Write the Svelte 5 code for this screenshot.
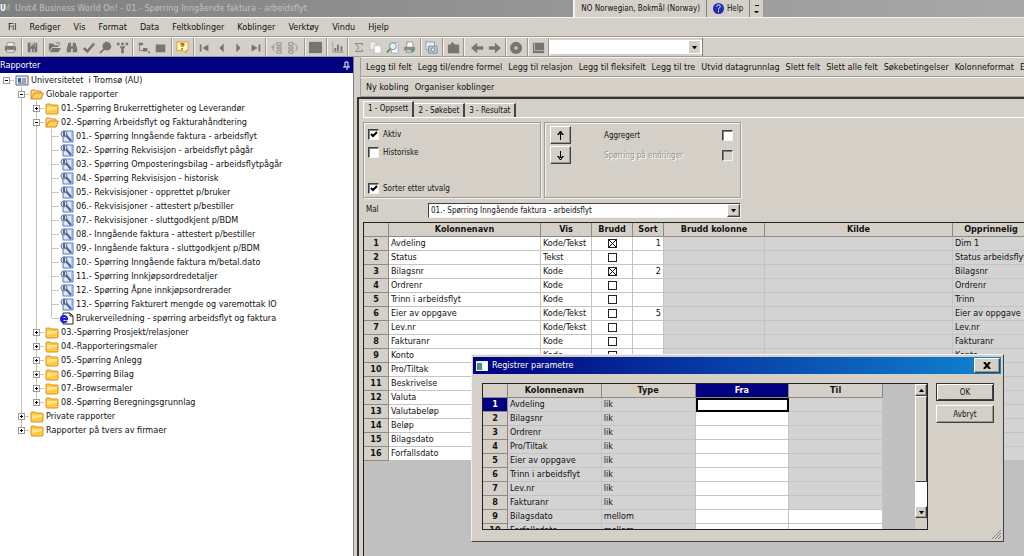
<script lang="ts">
  type TreeNode = { label: string; level: number; icon: string; state?: "open" | "closed"; last?: boolean };

  const menus = ["Fil", "Rediger", "Vis", "Format", "Data", "Feltkoblinger", "Koblinger", "Verktøy", "Vindu", "Hjelp"];

  const toolGroups = [
    ["print"],
    ["save"],
    ["open", "find", "check", "search", "filter"],
    ["tree", "stop"],
    ["help"],
    ["first", "prev", "next", "last"],
    ["collapse", "expand"],
    ["block"],
    ["chart"],
    ["sum", "copy", "preview", "printview"],
    ["camera"],
    ["paste"],
  ];
  const navGroups = [["back", "forward"], ["disc"], ["window"]];

  const fieldActions = [
    "Legg til felt",
    "Legg til/endre formel",
    "Legg til relasjon",
    "Legg til fleksifelt",
    "Legg til tre",
    "Utvid datagrunnlag",
    "Slett felt",
    "Slett alle felt",
    "Søkebetingelser",
    "Kolonneformat",
    "E",
  ];
  const linkActions = ["Ny kobling", "Organiser koblinger"];

  const reports = [
    "01.- Spørring Inngående faktura - arbeidsflyt",
    "02.- Spørring Rekvisisjon - arbeidsflyt pågår",
    "03.- Spørring Omposteringsbilag - arbeidsflytpågår",
    "04.- Spørring Rekvisisjon - historisk",
    "05.- Rekvisisjoner - opprettet p/bruker",
    "06.- Rekvisisjoner - attestert p/bestiller",
    "07.- Rekvisisjoner - sluttgodkjent p/BDM",
    "08.- Inngående faktura - attestert p/bestiller",
    "09.- Inngående faktura - sluttgodkjent p/BDM",
    "10.- Spørring Inngående faktura m/betal.dato",
    "11.- Spørring Innkjøpsordredetaljer",
    "12.- Spørring Åpne innkjøpsordrerader",
    "13.- Spørring Fakturert mengde og varemottak IO",
  ];

  const tree: TreeNode[] = [
    { label: "Universitetet  i Tromsø (AU)", level: 0, icon: "client", state: "open" },
    { label: "Globale rapporter", level: 1, icon: "folderOpen", state: "open" },
    { label: "01.-Spørring Brukerrettigheter og Leverandør", level: 2, icon: "folder", state: "closed" },
    { label: "02.-Spørring Arbeidsflyt og Fakturahåndtering", level: 2, icon: "folderOpen", state: "open" },
    ...reports.map((label) => ({ label, level: 3, icon: "report" })),
    { label: "Brukerveiledning - spørring arbeidsflyt og faktura", level: 3, icon: "web", last: true },
    { label: "03.-Spørring Prosjekt/relasjoner", level: 2, icon: "folder", state: "closed" },
    { label: "04.-Rapporteringsmaler", level: 2, icon: "folder", state: "closed" },
    { label: "05.-Spørring Anlegg", level: 2, icon: "folder", state: "closed" },
    { label: "06.-Spørring Bilag", level: 2, icon: "folder", state: "closed" },
    { label: "07.-Browsermaler", level: 2, icon: "folder", state: "closed" },
    { label: "08.-Spørring Beregningsgrunnlag", level: 2, icon: "folder", state: "closed", last: true },
    { label: "Private rapporter", level: 1, icon: "folder", state: "closed" },
    { label: "Rapporter på tvers av firmaer", level: 1, icon: "folder", state: "closed", last: true },
  ];

  const columns = [
    { name: "Avdeling", vis: "Kode/Tekst", brudd: true, sort: "1", origin: "Dim 1" },
    { name: "Status", vis: "Tekst", brudd: false, sort: "", origin: "Status arbeidsflyt" },
    { name: "Bilagsnr", vis: "Kode", brudd: true, sort: "2", origin: "Bilagsnr" },
    { name: "Ordrenr", vis: "Kode", brudd: false, sort: "", origin: "Ordrenr" },
    { name: "Trinn i arbeidsflyt", vis: "Kode", brudd: false, sort: "", origin: "Trinn" },
    { name: "Eier av oppgave", vis: "Kode/Tekst", brudd: false, sort: "5", origin: "Eier av oppgave" },
    { name: "Lev.nr", vis: "Kode/Tekst", brudd: false, sort: "", origin: "Lev.nr" },
    { name: "Fakturanr", vis: "Kode", brudd: false, sort: "", origin: "Fakturanr" },
    { name: "Konto", vis: "Kode", brudd: false, sort: "", origin: "Konto" },
    ...["Pro/Tiltak", "Beskrivelse", "Valuta", "Valutabeløp", "Beløp", "Bilagsdato", "Forfallsdato"].map((name) => ({
      name,
      vis: "",
      brudd: false,
      sort: "",
      origin: "",
    })),
  ];

  const parameters = [
    ...["Avdeling", "Bilagsnr", "Ordrenr", "Pro/Tiltak", "Eier av oppgave", "Trinn i arbeidsflyt", "Lev.nr", "Fakturanr"].map(
      (name) => ({ name, type: "lik" })
    ),
    { name: "Bilagsdato", type: "mellom" },
    { name: "Forfallsdato", type: "mellom" },
  ];

  let activeTab = $state(0);
  let dialogOpen = $state(true);
</script>

{#snippet toolIcon(name: string)}
  <svg viewBox="0 0 15 15" fill="#777570" stroke="none" aria-hidden="true">
    {#if name === "print"}
      <path d="M4 2h8l-1 4H3z" fill="#f4f4f4" stroke="#888" />
      <path d="M1 6h13v5H1z" />
      <path d="M3 10h9v3H3z" fill="#e8eee8" stroke="#888" />
      <path d="M11 8h2" stroke="#8fc48f" />
    {:else if name === "save"}
      <path d="M2 2h11v11H2z" />
      <path d="M4 2h1v5h6V2M5 9h2v4H5zM9 9h1v4H9z" fill="#c4c1ba" />
      <path d="M5 7l5-5v5z" />
    {:else if name === "open"}
      <path d="M1 3h5l1 2h5v2H5l-4 5z" />
      <path d="M5 8h10l-3 5H2z" />
      <path d="M9 2h4v3" fill="none" stroke="#777570" />
    {:else if name === "find"}
      <path d="M4 2h3v4h2V2h3l2 7v4H9V9H7v4H2V9z" />
    {:else if name === "check"}
      <path d="M2 8l4 4 8-9" fill="none" stroke="#777570" stroke-width="3" />
    {:else if name === "search"}
      <circle cx="9" cy="6" r="5" />
      <path d="M6 9l-5 5" stroke="#777570" stroke-width="2" />
    {:else if name === "filter"}
      <path d="M1 2h3v3H1zM6 2h3v3H6zM11 2h3v3h-3zM4 6h7L9 9v5H6V9z" />
    {:else if name === "tree"}
      <path d="M2 2h5v3H2zM7 8h5v4H7zM13 12h2v2h-2z" />
      <path d="M3 5v6h4" fill="none" stroke="#777570" />
    {:else if name === "stop"}
      <path d="M2 4h11v9H2z" />
    {:else if name === "help"}
      <path d="M1 1h13v10h-3l1 3-5-3H1z" fill="#fff7b8" stroke="#d6932c" />
      <path d="M5 4q3-2 4 0 0 1-2 2v1M7 8v2" fill="none" stroke="#b06a1a" stroke-width="2" />
    {:else if name === "first"}
      <path d="M2 4h2v8H2zM12 4v8L5 8z" />
    {:else if name === "prev"}
      <path d="M10 3v10L5 8z" />
    {:else if name === "next"}
      <path d="M5 3v10l5-5z" />
    {:else if name === "last"}
      <path d="M3 4v8l7-4zM11 4h2v8h-2z" />
    {:else if name === "collapse"}
      <path d="M8 2h5v3H8zM8 7h5v2H8zM8 11h5v3H8z" fill="none" stroke="#888" />
      <path d="M6 3q-5 4-1 9M1 7h4" fill="none" stroke="#888" />
    {:else if name === "expand"}
      <path d="M2 2h5v3H2zM2 7h5v2H2zM2 11h5v3H2z" fill="none" stroke="#888" />
      <path d="M9 3q5 4 1 9" fill="none" stroke="#888" />
    {:else if name === "block"}
      <path d="M0 1h15v13H0z" />
    {:else if name === "chart"}
      <path d="M2 1v12h13" fill="none" stroke="#999" />
      <path d="M4 8h2v4H4zM7 4h2v8H7zM11 6h2v6h-2z" />
    {:else if name === "sum"}
      <path d="M12 5V3H4l4 5-4 4h8v-2" fill="none" stroke="#777" />
    {:else if name === "copy"}
      <path d="M1 1h7v9H1z" fill="#eee" stroke="#bbb" />
      <path d="M6 5h5l3 2v7H6z" fill="#fff" stroke="#bbb" />
    {:else if name === "preview"}
      <path d="M7 2h7v12H6z" fill="#fff" stroke="#9aa5b5" />
      <circle cx="8" cy="6" r="4" fill="#dff0f4" stroke="#728094" />
      <path d="M5 9l-4 4" stroke="#5f8a58" stroke-width="2" />
    {:else if name === "printview"}
      <path d="M5 1h6l1 6H4z" fill="#fff" stroke="#888" />
      <path d="M1 7h13v4H1z" fill="#8c8c8c" />
      <path d="M4 10h7v3H4z" fill="#cfe8c8" stroke="#888" />
      <circle cx="11" cy="11" r="2" fill="#58a657" />
    {:else if name === "camera"}
      <path d="M1 1h10v9H1z" fill="#e4ebf0" stroke="#8b97a5" />
      <path d="M4 6h10v8H4z" fill="#b8c5d4" stroke="#7d8a99" />
      <circle cx="9" cy="10" r="2" fill="#f4f4f4" stroke="#66788d" />
    {:else if name === "paste"}
      <path d="M1 4h3l2-3 3 3h5v10H1z" />
    {:else if name === "back"}
      <path d="M0 8l7-6v4h7v4H7v4z" />
    {:else if name === "forward"}
      <path d="M15 8L8 2v4H1v4h7v4z" />
    {:else if name === "disc"}
      <circle cx="7" cy="8" r="7" />
      <circle cx="7" cy="8" r="2" fill="#d4d0c8" />
    {:else}
      <path d="M1 2h13v12H1z" />
      <path d="M3 2v9h11" fill="none" stroke="#bbb" />
    {/if}
  </svg>
{/snippet}

{#snippet treeIcon(name: string)}
  <svg class="tree-icon" viewBox="0 0 14 13" aria-hidden="true">
    {#if name === "client"}
      <path d="M1 2h12v9H1z" fill="#e9eef8" stroke="#5a6478" />
      <path d="M3 4h3v4H3z" fill="#2f5fd0" />
      <path d="M7 5h4M7 7h4M3 9h8" stroke="#555" />
    {:else if name === "folder"}
      <path d="M1 3q0-1 1-1h3l1 1h6q1 0 1 1v7q0 1-1 1H2q-1 0-1-1z" fill="#ffcb3d" stroke="#d8922a" />
      <path d="M2 5h10v2L2 9z" fill="#ffe38b" />
    {:else if name === "folderOpen"}
      <path d="M1 11V3q0-1 1-1h3l1 1h5v3" fill="#ffe08a" stroke="#d8832a" />
      <path d="M1 11l3-6h9q1 0 0 1l-2 5z" fill="#ffd153" stroke="#d8832a" />
    {:else if name === "report"}
      <path d="M3 1h10v11H3z" fill="#d9e8fb" stroke="#4f79cc" />
      <path d="M12 2v9" stroke="#7fa4ea" />
      <circle cx="4" cy="4" r="3" fill="#dde3ee" stroke="#66728e" />
      <path d="M4 2v4M6 5l5 6" stroke="#53617e" stroke-width="2" />
    {:else}
      <path d="M3 1h7l3 3v8H3z" fill="#fff" stroke="#222" />
      <path d="M10 1v3h3" fill="none" stroke="#222" />
      <path d="M2 7h5q0-3-3-3T1 7t3 3q2 0 3-1" fill="none" stroke="#1423d6" stroke-width="2" />
    {/if}
  </svg>
{/snippet}

{#snippet tools(groups: string[][])}
  {#each groups as group}
    <div class="tool-group">
      {#each group as name}
        <button class="tool" aria-label={name}>{@render toolIcon(name)}</button>
      {/each}
    </div>
  {/each}
{/snippet}

{#snippet arrow(direction: string)}
  <svg class="arrow" viewBox="0 0 7 4" aria-hidden="true">
    <path d={direction === "up" ? "M0 4h7L4 0H3z" : "M0 0h7L4 4H3z"} />
  </svg>
{/snippet}

<div class="app">
  <header class="title-bar">
    <div class="title">
      <span class="logo"><b>U</b><i>4</i></span>
      <span>Unit4 Business World On! - 01.- Spørring Inngående faktura - arbeidsflyt</span>
    </div>
    <div class="lang-bar">
      <button class="lang">NO Norwegian, Bokmål (Norway)</button>
      <button class="lang-help">
        <svg viewBox="0 0 12 12" aria-hidden="true">
          <circle cx="6" cy="6" r="6" fill="#1c2fae" />
          <path d="M4 4q0-2 2-2t2 2q0 1-2 2v1M6 8v2" fill="none" stroke="#fff" stroke-width="1" />
        </svg>
        Help
      </button>
      <button class="lang-more" aria-label="Options">
        <svg viewBox="0 0 6 10" aria-hidden="true"><path d="M1 1h4v1H1zM0 7h5L3 9H2z" /></svg>
      </button>
    </div>
  </header>

  <nav class="menu-bar">
    {#each menus as menu}
      <button>{menu}</button>
    {/each}
  </nav>

  <div class="toolbar">
    {@render tools(toolGroups)}
    <div class="nav-tools">
      {@render tools(navGroups)}
      <div class="address">
        <input type="text" aria-label="Adresse" />
        <button aria-label="Vis liste">{@render arrow("down")}</button>
      </div>
    </div>
  </div>

  <div class="workspace">
    <aside class="sidebar">
      <div class="sidebar-title">
        <span>Rapporter</span>
        <button aria-label="Fest">
          <svg viewBox="0 0 7 9" fill="none" stroke="#fff" aria-hidden="true">
            <path d="M2 1v5M2 1h3v5M0 6h7M4 6v3" />
          </svg>
        </button>
      </div>
      <ul class="tree">
        {#each tree as node}
          <li>
            {#each { length: node.level } as _, i}
              <span class="guide" class:line={i > 0}></span>
            {/each}
            <span class="guide elbow" class:line={node.level > 0 && !node.last} class:end={node.last}>
              {#if node.state}
                <button class="toggle" class:closed={node.state === "closed"} aria-label={node.label}></button>
              {/if}
            </span>
            {@render treeIcon(node.icon)}
            <span class="node-label">{node.label}</span>
          </li>
        {/each}
      </ul>
    </aside>

    <main class="content">
      <div class="action-bar">
        {#each fieldActions as action}
          <button>{action}</button>
        {/each}
      </div>
      <div class="action-bar">
        {#each linkActions as action}
          <button>{action}</button>
        {/each}
      </div>

      <div class="frame">
        <div class="tabs" role="tablist">
          {#each ["1 - Oppsett", "2 - Søkebet", "3 - Resultat"] as tab, i}
            <button role="tab" aria-selected={activeTab === i} class:active={activeTab === i} onclick={() => (activeTab = i)}>
              {tab}
            </button>
          {/each}
        </div>
        <div class="page">
          <div class="groups">
            <div class="group options">
              <label><input type="checkbox" class="check" checked /> Aktiv</label>
              <label><input type="checkbox" class="check" /> Historiske</label>
              <label class="sorter"><input type="checkbox" class="check" checked /> Sorter etter utvalg</label>
            </div>
            <div class="group aggregate">
              <button class="move" aria-label="Flytt opp">
                <svg viewBox="0 0 9 11" aria-hidden="true"><path d="M4 2h1v8H4zM1 5l3-4h1l3 4H6L5 3H4L3 5z" /></svg>
              </button>
              <label for="aggregert">Aggregert</label>
              <input id="aggregert" type="checkbox" class="check" />
              <button class="move" aria-label="Flytt ned">
                <svg viewBox="0 0 9 11" aria-hidden="true"><path d="M4 1h1v8H4zM1 6l3 4h1l3-4H6L5 8H4L3 6z" /></svg>
              </button>
              <label for="endringer" class="disabled">Spørring på endringer</label>
              <input id="endringer" type="checkbox" class="check" disabled />
            </div>
          </div>

          <div class="template">
            <label for="mal">Mal</label>
            <div class="combo">
              <select id="mal">
                {#each reports as report}
                  <option>{report}</option>
                {/each}
              </select>
              <span class="combo-arrow">{@render arrow("down")}</span>
            </div>
          </div>

          <div class="grid-pane">
            <table class="grid main-grid">
              <thead>
                <tr>
                  <th class="num"></th>
                  <th class="name">Kolonnenavn</th>
                  <th class="vis">Vis</th>
                  <th class="brudd">Brudd</th>
                  <th class="sort">Sort</th>
                  <th class="group-column">Brudd kolonne</th>
                  <th class="source">Kilde</th>
                  <th>Opprinnelig</th>
                </tr>
              </thead>
              <tbody>
                {#each columns as row, i}
                  <tr>
                    <th scope="row">{i + 1}</th>
                    <td>{row.name}</td>
                    <td>{row.vis}</td>
                    <td class="center"><input type="checkbox" class="cell-check" checked={row.brudd} aria-label="Brudd" /></td>
                    <td class="right">{row.sort}</td>
                    <td class="locked"></td>
                    <td class="locked"></td>
                    <td class="locked">{row.origin}</td>
                  </tr>
                {/each}
              </tbody>
            </table>
          </div>
        </div>
      </div>
    </main>
  </div>

  {#if dialogOpen}
    <div class="dialog" role="dialog" aria-labelledby="dialog-title">
      <div class="dialog-title">
        <svg viewBox="0 0 12 10" aria-hidden="true">
          <path d="M0 0h12v10H0z" fill="#e8f0f4" />
          <path d="M1 2h5v7H1z" fill="#4c8f86" />
          <path d="M7 2h4v7H7z" fill="#fff" />
        </svg>
        <h2 id="dialog-title">Registrer parametre</h2>
        <button class="close" aria-label="Lukk" onclick={() => (dialogOpen = false)}>
          <svg viewBox="0 0 8 7" aria-hidden="true"><path d="M1 0l6 7M7 0L1 7" stroke="#000" stroke-width="2" /></svg>
        </button>
      </div>
      <div class="dialog-body">
        <div class="param-pane">
          <div class="param-scroll">
            <table class="grid param-grid">
              <thead>
                <tr>
                  <th class="num"></th>
                  <th>Kolonnenavn</th>
                  <th>Type</th>
                  <th class="selected">Fra</th>
                  <th>Til</th>
                </tr>
              </thead>
              <tbody>
                {#each parameters as row, i}
                  <tr>
                    <th scope="row" class:selected={i === 0}>{i + 1}</th>
                    <td class="locked">{row.name}</td>
                    <td class="locked">{row.type}</td>
                    <td class="entry" class:current={i === 0}><input type="text" aria-label="{row.name} fra" /></td>
                    {#if row.type === "mellom"}
                      <td class="entry"><input type="text" aria-label="{row.name} til" /></td>
                    {:else}
                      <td class="locked"></td>
                    {/if}
                  </tr>
                {/each}
              </tbody>
            </table>
          </div>
          <div class="scrollbar">
            <button aria-label="Rull opp">{@render arrow("up")}</button>
            <div class="thumb"></div>
            <div class="track"></div>
            <button aria-label="Rull ned">{@render arrow("down")}</button>
            <div class="corner"></div>
          </div>
        </div>
        <div class="dialog-actions">
          <button class="default" onclick={() => (dialogOpen = false)}>OK</button>
          <button onclick={() => (dialogOpen = false)}>Avbryt</button>
        </div>
      </div>
      <svg class="grip" viewBox="0 0 9 9" stroke="#808080" aria-hidden="true">
        <path d="M0 9l9-9M3 9l6-6M6 9l3-3" />
      </svg>
    </div>
  {/if}
</div>

<style>
  :global(body) {
    margin: 0;
    background: #c0c0c0;
  }

  .app {
    --face: #d4d0c8;
    --shade: #808080;
    --navy: #000080;
    display: flex;
    flex-direction: column;
    height: 100vh;
    overflow: hidden;
    background: var(--face);
    color: #111;
    font-family: "DejaVu Sans Condensed", "DejaVu Sans", sans-serif;
    font-size: 9px;
    line-height: 13px;
  }

  .app *,
  .app *::before,
  .app *::after {
    box-sizing: border-box;
  }

  button {
    padding: 0;
    border: 0;
    background: transparent;
    color: inherit;
    font: inherit;
    white-space: nowrap;
  }

  input,
  select {
    margin: 0;
    padding: 0;
    border: 0;
    border-radius: 0;
    outline: 0;
    font: inherit;
    color: inherit;
    appearance: none;
  }

  svg {
    display: block;
    flex: none;
  }

  /* title bar */
  .title-bar {
    display: flex;
    flex: none;
    height: 17px;
    background: linear-gradient(90deg, #808080, #a8a8a8);
  }

  .title-bar::after {
    content: "";
    flex: 5 1 0;
  }

  .title {
    display: flex;
    flex: 11 1 0;
    align-items: center;
    gap: 4px;
    min-width: 0;
    overflow: hidden;
    color: #c4c1ba;
    white-space: nowrap;
  }

  .logo {
    width: 11px;
    font-size: 8px;
  }

  .logo b {
    color: #fff;
  }

  .logo i {
    color: #8fbf8f;
  }

  .lang-bar {
    display: flex;
    flex: none;
    width: 190px;
    border-left: 2px solid #f4f2ee;
    background: var(--face);
    font-size: 8px;
  }

  .lang {
    flex: 1;
  }

  .lang-help {
    display: flex;
    align-items: center;
    gap: 3px;
    padding: 0 6px;
    border-left: 1px solid var(--shade);
  }

  .lang-help svg {
    width: 11px;
    height: 11px;
  }

  .lang-more {
    width: 14px;
    padding-left: 4px;
    border-left: 1px solid var(--shade);
  }

  .lang-more svg {
    width: 6px;
    height: 10px;
  }

  /* menus and toolbar */
  .menu-bar {
    display: flex;
    flex: none;
    gap: 13px;
    height: 20px;
    padding: 0 8px;
    border-top: 1px solid #f4f2ee;
    border-bottom: 1px solid #a09d97;
  }

  .toolbar {
    display: flex;
    flex: none;
    height: 20px;
    border-top: 1px solid #f4f2ee;
    border-bottom: 1px solid #a09d97;
  }

  .tool-group {
    display: flex;
    align-items: center;
    padding: 0 2px;
    border-right: 1px solid #9a978f;
    box-shadow: 1px 0 #f4f2ee;
  }

  .tool-group:nth-child(3n) {
    padding-right: 1px;
  }

  .tool {
    display: flex;
    justify-content: center;
    width: 17px;
  }

  .tool svg {
    width: 13px;
    height: 13px;
  }

  .nav-tools {
    display: flex;
    padding-left: 3px;
    border-right: 1px solid var(--shade);
  }

  .address {
    display: flex;
    align-items: center;
    margin: 2px 0;
    background: #fff;
  }

  .address input {
    width: 140px;
    height: 14px;
  }

  .address button {
    display: flex;
    align-items: center;
    justify-content: center;
    width: 11px;
    height: 12px;
    margin-right: 2px;
    background: var(--face);
  }

  .arrow {
    width: 7px;
    height: 4px;
  }

  .address .arrow {
    width: 5px;
    height: 3px;
  }

  .workspace {
    display: flex;
    flex: 1;
    min-height: 0;
  }

  /* report tree */
  .sidebar {
    display: flex;
    flex: none;
    flex-direction: column;
    width: 354px;
    background: #fff;
    border-right: 1px solid var(--shade);
  }

  .sidebar-title {
    display: flex;
    align-items: center;
    justify-content: space-between;
    height: 16px;
    padding-right: 3px;
    background: var(--navy);
    color: #fff;
  }

  .sidebar-title svg {
    width: 7px;
    height: 9px;
  }

  .tree {
    margin: 0;
    padding: 0;
    list-style: none;
  }

  .tree li {
    display: flex;
    align-items: center;
    height: 14px;
  }

  .guide {
    position: relative;
    flex: none;
    width: 15px;
    height: 14px;
  }

  .guide.line::before,
  .guide.end::before {
    content: "";
    position: absolute;
    top: 0;
    left: 6px;
    height: 14px;
    border-left: 1px solid #c8c4bc;
  }

  .guide.end::before {
    height: 7px;
  }

  .guide.elbow::after {
    content: "";
    position: absolute;
    top: 7px;
    left: 7px;
    width: 7px;
    border-top: 1px solid #c8c4bc;
  }

  .toggle {
    position: absolute;
    z-index: 1;
    top: 4px;
    left: 3px;
    width: 7px;
    height: 7px;
    border: 1px solid #9a9a9a;
    background: linear-gradient(#000, #000) center / 3px 1px no-repeat #fff;
  }

  .toggle.closed {
    background:
      linear-gradient(#000, #000) center / 3px 1px no-repeat,
      linear-gradient(#000, #000) center / 1px 3px no-repeat,
      #fff;
  }

  .tree-icon {
    width: 14px;
    height: 13px;
  }

  .node-label {
    padding-left: 2px;
    white-space: pre;
  }

  /* main area */
  .content {
    display: flex;
    flex: 1;
    flex-direction: column;
    min-width: 0;
    padding-left: 3px;
  }

  .action-bar {
    display: flex;
    flex: none;
    gap: 6px;
    height: 20px;
    margin-left: 3px;
    padding-left: 5px;
    overflow: hidden;
    border-top: 1px solid #f4f2ee;
    border-bottom: 1px solid #a09d97;
    border-left: 1px solid #a09d97;
  }

  .frame {
    display: flex;
    flex: 1;
    flex-direction: column;
    min-height: 0;
    padding: 2px 0 0 4px;
    border-top: 2px solid #333;
    border-left: 2px solid #333;
    font-size: 8px;
  }

  .tabs {
    display: flex;
    flex: none;
    align-items: flex-end;
    height: 16px;
  }

  .tabs button {
    height: 14px;
    padding: 0 4px;
    border-top: 1px solid #fff;
    border-right: 2px solid #444;
  }

  .tabs .active {
    height: 16px;
    padding-bottom: 2px;
    border-left: 1px solid #fff;
  }

  .page {
    display: flex;
    flex: 1;
    flex-direction: column;
    min-height: 0;
    padding-top: 4px;
    border-top: 1px solid #fff;
  }

  .groups {
    display: flex;
    flex: none;
    gap: 3px;
    height: 76px;
  }

  .group {
    display: grid;
    align-content: start;
    border: 1px solid #a09d97;
    box-shadow: inset 1px 1px #f4f2ee, 1px 1px #f4f2ee;
  }

  .options {
    grid-template-rows: repeat(4, 18px);
    width: 178px;
    padding: 2px 4px;
  }

  .options label {
    display: flex;
    align-items: center;
    gap: 4px;
  }

  .options .sorter {
    grid-row: 4;
  }

  .aggregate {
    grid-template-columns: 21px 1fr 11px;
    grid-auto-rows: 20px;
    align-items: center;
    column-gap: 33px;
    width: 197px;
    padding: 2px 7px 0 5px;
  }

  .disabled {
    color: #9a978f;
    text-shadow: 1px 1px #fff;
    white-space: nowrap;
  }

  .move {
    display: flex;
    align-items: center;
    justify-content: center;
    width: 21px;
    height: 18px;
  }

  .move svg {
    width: 9px;
    height: 11px;
  }

  .move,
  .close,
  .dialog-actions button,
  .scrollbar button,
  .combo-arrow {
    border: 1px solid;
    border-color: #fff #404040 #404040 #fff;
    box-shadow: inset -1px -1px #9a978f;
    background: var(--face);
  }

  .check {
    flex: none;
    width: 11px;
    height: 11px;
    border: 1px solid;
    border-color: #404040 #f4f2ee #f4f2ee #404040;
    box-shadow: inset 1px 1px #808080;
    background: #fff;
  }

  .check:checked {
    background: url("data:image/svg+xml,%3Csvg xmlns='http://www.w3.org/2000/svg' viewBox='0 0 9 9'%3E%3Cpath d='M2 4l2 2 4-4' fill='none' stroke='black' stroke-width='2'/%3E%3C/svg%3E") #fff;
  }

  .check:disabled {
    background: var(--face);
  }

  .template {
    display: flex;
    flex: none;
    width: 378px;
    height: 15px;
    margin: 5px 0 4px;
  }

  .template label {
    width: 65px;
    padding-left: 3px;
  }

  .combo {
    display: flex;
    flex: 1;
    border: 1px solid;
    border-color: #404040 #f4f2ee #f4f2ee #404040;
    background: #fff;
  }

  .combo select {
    flex: 1;
    min-width: 0;
    padding-left: 2px;
    background: #fff;
  }

  .combo-arrow {
    display: flex;
    align-items: center;
    justify-content: center;
    width: 13px;
  }

  .combo-arrow .arrow {
    width: 5px;
    height: 3px;
  }

  /* grids */
  .grid-pane {
    flex: 1;
    min-height: 0;
    overflow: hidden;
    border-top: 1px solid #222;
    border-left: 1px solid #222;
    background: #c0c0c0;
  }

  .grid {
    table-layout: fixed;
    border-spacing: 0;
    font-size: 9px;
    line-height: 13px;
  }

  .main-grid {
    width: 666px;
  }

  .grid th,
  .grid td {
    height: 14px;
    padding: 0 2px;
    overflow: hidden;
    border-right: 1px solid #c4c4c4;
    border-bottom: 1px solid #c4c4c4;
    background: #fff;
    text-align: left;
    white-space: nowrap;
  }

  .grid th {
    border-color: #8c8a85;
    background: var(--face);
    text-align: center;
  }

  .grid .locked {
    background: #d3d3d3;
  }

  .grid .center {
    text-align: center;
  }

  .grid .right {
    text-align: right;
  }

  .grid .num {
    width: 25px;
  }

  .name {
    width: 152px;
  }

  .vis {
    width: 51px;
  }

  .brudd {
    width: 41px;
  }

  .sort {
    width: 31px;
  }

  .group-column {
    width: 101px;
  }

  .source {
    width: 188px;
  }

  .cell-check {
    display: block;
    width: 9px;
    height: 9px;
    margin: 0 auto;
    border: 1px solid #222;
  }

  .cell-check:checked {
    background: url("data:image/svg+xml,%3Csvg xmlns='http://www.w3.org/2000/svg' viewBox='0 0 7 7'%3E%3Cpath d='M0 0l7 7M7 0L0 7' stroke='black'/%3E%3C/svg%3E");
  }

  .grid .selected {
    background: var(--navy);
    color: #fff;
  }

  /* parameter dialog */
  .dialog {
    position: absolute;
    top: 354px;
    left: 471px;
    width: 533px;
    padding: 2px 2px 11px 1px;
    border: 1px solid;
    border-color: #f4f2ee #404040 #404040 #f4f2ee;
    background: var(--face);
    font-size: 8px;
  }

  .dialog-title {
    display: flex;
    align-items: center;
    gap: 4px;
    height: 17px;
    padding: 0 1px 0 3px;
    background: linear-gradient(90deg, #000080, #1084d0);
    color: #fff;
  }

  .dialog-title > svg {
    width: 12px;
    height: 10px;
  }

  .dialog-title h2 {
    flex: 1;
    margin: 0;
    font-size: 9px;
    font-weight: 400;
  }

  .close {
    display: flex;
    align-items: center;
    justify-content: center;
    width: 26px;
    height: 15px;
  }

  .close svg {
    width: 8px;
    height: 7px;
  }

  .dialog-body {
    display: flex;
    gap: 8px;
    padding: 9px 7px 0 9px;
  }

  .param-pane {
    display: flex;
    flex: 1;
    height: 147px;
    border: 1px solid #222;
    background: #c0c0c0;
  }

  .param-scroll {
    flex: 1;
    overflow: hidden;
  }

  .param-grid {
    width: 400px;
  }

  .grid .entry {
    padding: 0;
  }

  .entry input {
    display: block;
    width: 100%;
    height: 13px;
    padding: 0 2px;
    background: transparent;
  }

  .grid .current {
    border: 0;
    box-shadow: inset 0 0 0 2px #000;
  }

  .scrollbar {
    display: flex;
    flex-direction: column;
    width: 12px;
    background: #fff;
  }

  .scrollbar button {
    display: flex;
    align-items: center;
    justify-content: center;
    height: 12px;
  }

  .scrollbar .arrow {
    width: 5px;
    height: 3px;
  }

  .thumb {
    flex: 7;
    border: 1px solid;
    border-color: #fff #404040 #404040 #fff;
    background: var(--face);
  }

  .track {
    flex: 2;
  }

  .corner {
    height: 11px;
    background: var(--face);
  }

  .dialog-actions {
    display: flex;
    flex-direction: column;
    gap: 4px;
    width: 58px;
  }

  .dialog-actions button {
    height: 18px;
  }

  .dialog-actions .default {
    border-color: #333;
    box-shadow: inset 1px 1px #fff, inset -1px -1px #404040;
  }

  .grip {
    position: absolute;
    right: 2px;
    bottom: 2px;
    width: 9px;
    height: 9px;
  }
</style>
